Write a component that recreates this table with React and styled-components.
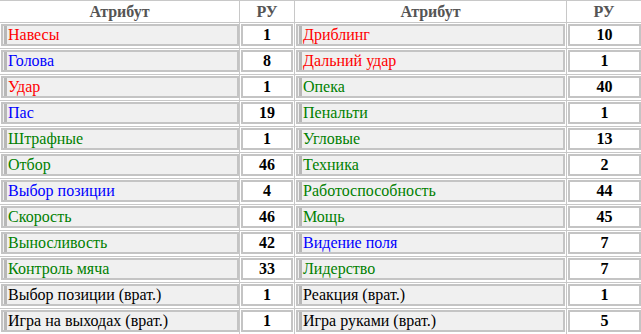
import React from "react";
import styled, { createGlobalStyle } from "styled-components";

const Global = createGlobalStyle`
  html, body { margin: 0; padding: 0; background: #fff; }
  body { font-family: "Liberation Serif", "Times New Roman", serif; }
`;

const COLORS = { r: "#ff0000", b: "#0000ff", g: "#008000", k: "#000000" };

const rows = [
  ["Навесы", "r", 1, "Дриблинг", "r", 10],
  ["Голова", "b", 8, "Дальний удар", "r", 1],
  ["Удар", "r", 1, "Опека", "g", 40],
  ["Пас", "b", 19, "Пенальти", "g", 1],
  ["Штрафные", "g", 1, "Угловые", "g", 13],
  ["Отбор", "g", 46, "Техника", "g", 2],
  ["Выбор позиции", "b", 4, "Работоспособность", "g", 44],
  ["Скорость", "g", 46, "Мощь", "g", 45],
  ["Выносливость", "g", 42, "Видение поля", "b", 7],
  ["Контроль мяча", "g", 33, "Лидерство", "g", 7],
  ["Выбор позиции (врат.)", "k", 1, "Реакция (врат.)", "k", 1],
  ["Игра на выходах (врат.)", "k", 1, "Игра руками (врат.)", "k", 5],
];

const Table = styled.div`
  display: grid;
  grid-template-columns: 240px 55px 272px 74px;
  width: 641px;
  border-top: 1px solid #c8c8c8;
`;

const HeadCell = styled.div`
  height: 21px;
  border-right: ${(p) => (p.$last ? "none" : "1px solid #c8c8c8")};
  border-bottom: 1px solid #c8c8c8;
  display: flex;
  align-items: center;
  justify-content: center;
  font-weight: bold;
  font-size: 16px;
  color: #555555;
`;

const Cell = styled.div`
  border-right: ${(p) => (p.$last ? "none" : "1px solid #c8c8c8")};
  border-bottom: 1px solid #c8c8c8;
  padding: 1px ${(p) => (p.$edge ? "0" : "1px")} 2px 1px;
`;

const NameBox = styled.div`
  height: 22px;
  box-sizing: border-box;
  border: 2px solid #c4c4c4;
  background: #f0f0f0;
  padding: 0 0 0 1px;
  display: flex;
  align-items: stretch;
`;

const Name = styled.div`
  flex: 1;
  border-left: 3px solid #b8b8b8;
  padding-left: 1px;
  display: flex;
  align-items: center;
  font-size: 16px;
  color: ${(p) => p.$color};
  white-space: nowrap;
`;

const ValueBox = styled.div`
  height: 22px;
  box-sizing: border-box;
  border: 2px solid #c4c4c4;
  background: #ffffff;
  display: flex;
  align-items: center;
  justify-content: center;
  font-weight: bold;
  font-size: 16px;
  color: #000;
`;

export default function App() {
  return (
    <>
      <Global />
      <Table>
        <HeadCell>Атрибут</HeadCell>
        <HeadCell>РУ</HeadCell>
        <HeadCell>Атрибут</HeadCell>
        <HeadCell $last>РУ</HeadCell>
        {rows.map(([n1, c1, v1, n2, c2, v2]) => (
          <React.Fragment key={n1}>
            <Cell $edge>
              <NameBox>
                <Name $color={COLORS[c1]}>{n1}</Name>
              </NameBox>
            </Cell>
            <Cell>
              <ValueBox>{v1}</ValueBox>
            </Cell>
            <Cell>
              <NameBox>
                <Name $color={COLORS[c2]}>{n2}</Name>
              </NameBox>
            </Cell>
            <Cell $last $edge>
              <ValueBox>{v2}</ValueBox>
            </Cell>
          </React.Fragment>
        ))}
      </Table>
    </>
  );
}
